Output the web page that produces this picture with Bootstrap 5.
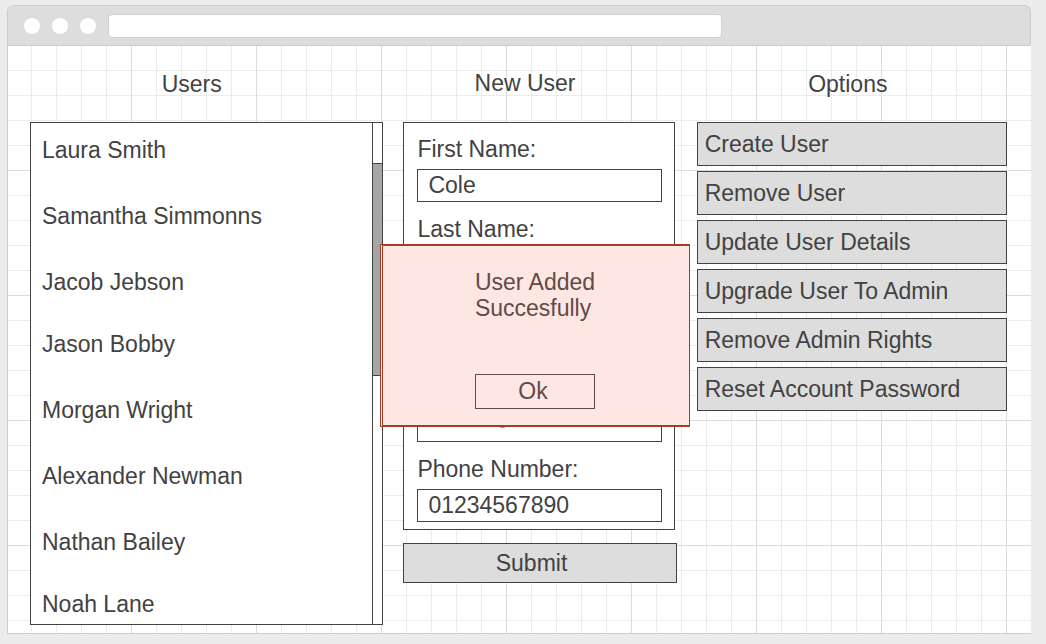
<!DOCTYPE html>
<html lang="en">
<head>
<meta charset="utf-8">
<meta name="viewport" content="width=device-width, initial-scale=1">
<title>User administration</title>
<link href="https://cdn.jsdelivr.net/npm/bootstrap@5.3.0/dist/css/bootstrap.min.css" rel="stylesheet">
<style>
  :root { --ink: #424242; --panel: #ddd; --edge: #ccc; }
  body {
    background: #ececec;
    color: var(--ink);
    font-family: "Liberation Sans", Arial, sans-serif;
    font-size: 23px;
    line-height: 26px;
    padding: 5px 15px 10px 7px;
  }
  .browser { border: 1px solid var(--edge); border-right-width: 0; border-radius: 6px 6px 0 0; }
  .chrome-bar {
    background: var(--panel);
    border-right: 1px solid var(--edge);
    border-bottom: 1px solid var(--edge);
    border-top-right-radius: 6px;
    padding: 8px 0 7px 16px;
    gap: 12px;
  }
  .dot { width: 16px; height: 16px; border-radius: 50%; background: #fff; }
  .address { width: 61%; height: 24px; border: 1px solid #d0d0d0; border-radius: 4px; background: #fff; }
  /* graph paper: a line each 25px, a stronger one each 125px */
  .canvas {
    background-color: #fff;
    background-image:
      linear-gradient(to right, #dcdcdc 1px, transparent 1px),
      linear-gradient(to bottom, #dcdcdc 1px, transparent 1px),
      linear-gradient(to right, #ebebeb 1px, transparent 1px),
      linear-gradient(to bottom, #ebebeb 1px, transparent 1px);
    background-size: 125px 125px, 125px 125px, 25px 25px, 25px 25px;
    background-position: 123px 0, 0 124px, 23px 0, 0 24px;
    display: grid;
    grid-template-columns: 353fr 273fr 310fr;
    column-gap: 20px;
    padding: 25px 24px 8px 22px;
  }
  h2 { font-size: 23px; line-height: 26px; font-weight: 400; text-align: center; margin: 0 0 25px; padding-right: 30px; }
  .new-user h2 { margin: -1px 0 26px; }
  .options h2 { padding-right: 8px; }
  .panel { background: #fff; border: 1px solid var(--ink); }
  .user-list { padding: 14px 11px 7px; }
  .user-list li { margin-bottom: 40px; }
  .user-list li:nth-child(4n+3) { margin-bottom: 36px; }
  .user-list li:last-child { margin-bottom: 0; }
  .track { width: 10px; border-left: 1px solid var(--ink); }
  .track .before { flex: 40 0 0; }
  .track .thumb { flex: 212 0 0; background: #a6a6a6; border: solid var(--ink); border-width: 1px 0; }
  .track .after { flex: 249 0 0; }
  .form-panel { padding: 13px 12px 7px 13px; display: grid; gap: 14px; margin: 0 2px 13px 0; }
  .form-label { display: block; margin-bottom: 7px; }
  .form-control, .form-control:focus {
    height: 33px; padding: 0 10px; border: 1px solid var(--ink); border-radius: 0;
    background: #fff; color: var(--ink); font-size: 23px; line-height: 26px;
  }
  .unlabelled { padding-top: 33px; }
  .email { padding-top: 14px; }
  .email .form-control { height: 52px; }
  .btn {
    --bs-btn-bg: var(--panel); --bs-btn-color: var(--ink); --bs-btn-border-color: var(--ink);
    --bs-btn-hover-bg: #d0d0d0; --bs-btn-hover-color: var(--ink); --bs-btn-hover-border-color: var(--ink);
    --bs-btn-font-size: 23px; --bs-btn-line-height: 26px; --bs-btn-border-radius: 0;
    --bs-btn-padding-x: 7px; --bs-btn-padding-y: 8px;
  }
  .btn-submit { --bs-btn-padding-y: 6px; padding-right: 24px; }
  .option-list { gap: 5px; }
  /* confirmation box lying over the form */
  .notice {
    top: 173px; left: -23px; right: -13px; height: 183px;
    padding: 23px 2px 16px 0;
    background: #fee6e2;
    border: solid #a33e26;
    border-width: 2px 1px 2px 3px;
    border-left-style: double;
    color: #624a48;
    z-index: 2;
  }
  .notice .btn {
    --bs-btn-bg: transparent; --bs-btn-color: #624a48; --bs-btn-border-color: #624a48;
    --bs-btn-padding-y: 4px; --bs-btn-padding-x: 4px; --bs-btn-line-height: 25px;
    padding-right: 8px;
  }
  @media (max-width: 767px) {
    .canvas { grid-template-columns: 1fr; row-gap: 24px; }
    .notice { left: 0; right: 0; }
  }
</style>
</head>
<body>
<div class="browser">
  <header class="chrome-bar d-flex align-items-center">
    <span class="dot"></span><span class="dot"></span><span class="dot"></span>
    <input class="address" type="text" aria-label="Address">
  </header>
  <main class="canvas">
    <section class="d-flex flex-column">
      <h2>Users</h2>
      <div class="panel d-flex flex-grow-1">
        <ul class="user-list list-unstyled flex-grow-1 mb-0">
          <li>Laura Smith</li>
          <li>Samantha Simmonns</li>
          <li>Jacob Jebson</li>
          <li>Jason Bobby</li>
          <li>Morgan Wright</li>
          <li>Alexander Newman</li>
          <li>Nathan Bailey</li>
          <li>Noah Lane</li>
        </ul>
        <div class="track d-flex flex-column">
          <div class="before"></div><div class="thumb"></div><div class="after"></div>
        </div>
      </div>
    </section>

    <section class="new-user position-relative">
      <h2>New User</h2>
      <form>
        <div class="panel form-panel">
          <div><label class="form-label" for="first">First Name:</label><input class="form-control" id="first" type="text" value="Cole"></div>
          <div><label class="form-label" for="last">Last Name:</label><input class="form-control" id="last" type="text"></div>
          <div class="unlabelled"><input class="form-control" type="text" aria-label="Username"></div>
          <div class="email"><input class="form-control" type="email" aria-label="Email" value="ColeS@mail.com"></div>
          <div><label class="form-label" for="phone">Phone Number:</label><input class="form-control" id="phone" type="tel" value="01234567890"></div>
        </div>
        <button class="btn btn-submit w-100" type="button">Submit</button>
      </form>
      <div class="notice position-absolute d-flex justify-content-center" role="alertdialog" aria-labelledby="notice-text">
        <div class="d-flex flex-column justify-content-between">
          <p class="mb-0" id="notice-text">User Added<br>Succesfully</p>
          <button class="btn" type="button">Ok</button>
        </div>
      </div>
    </section>

    <section class="options">
      <h2>Options</h2>
      <div class="option-list d-grid">
        <button class="btn text-start" type="button">Create User</button>
        <button class="btn text-start" type="button">Remove User</button>
        <button class="btn text-start" type="button">Update User Details</button>
        <button class="btn text-start" type="button">Upgrade User To Admin</button>
        <button class="btn text-start" type="button">Remove Admin Rights</button>
        <button class="btn text-start" type="button">Reset Account Password</button>
      </div>
    </section>
  </main>
</div>
<script src="https://cdn.jsdelivr.net/npm/bootstrap@5.3.0/dist/js/bootstrap.bundle.min.js"></script>
</body>
</html>
